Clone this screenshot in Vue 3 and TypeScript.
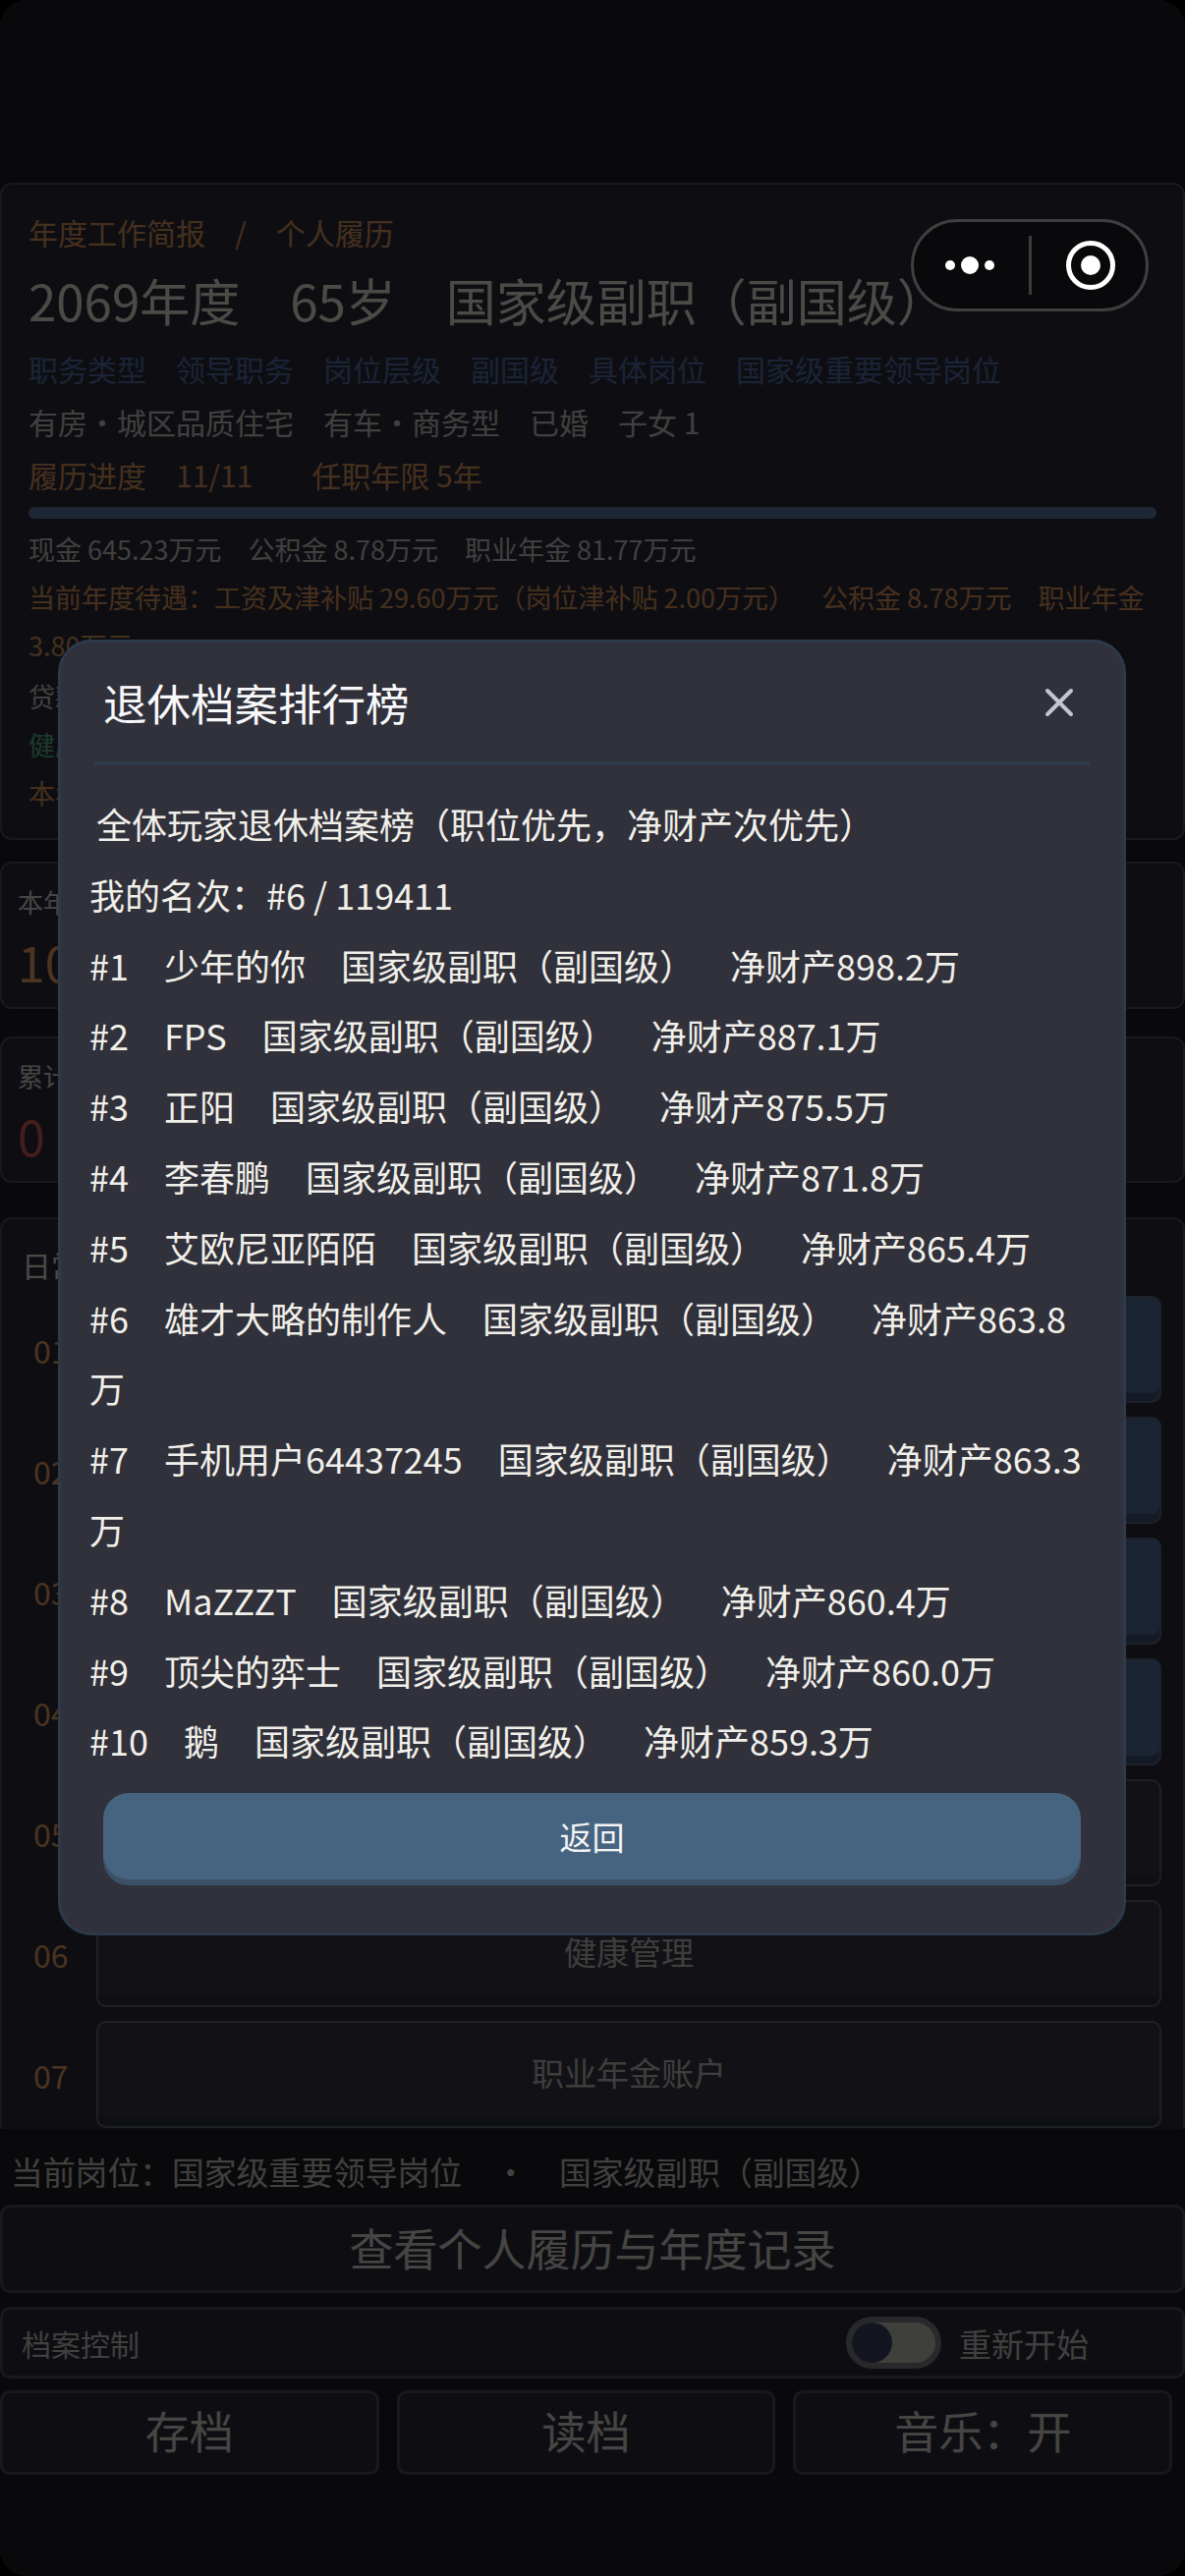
<script setup lang="ts">
const tasks: { no: string; label: string; active: boolean }[] = [
  { no: '01', label: '', active: true },
  { no: '02', label: '', active: true },
  { no: '03', label: '', active: true },
  { no: '04', label: '', active: true },
  { no: '05', label: '', active: false },
  { no: '06', label: '健康管理', active: false },
  { no: '07', label: '职业年金账户', active: false },
]
const grade = '国家级副职（副国级）'
const ranks: [string, string][] = [
  ['少年的你', '898.2'],
  ['FPS', '887.1'],
  ['正阳', '875.5'],
  ['李春鹏', '871.8'],
  ['艾欧尼亚陌陌', '865.4'],
  ['雄才大略的制作人', '863.8'],
  ['手机用户64437245', '863.3'],
  ['MaZZZT', '860.4'],
  ['顶尖的弈士', '860.0'],
  ['鹅', '859.3'],
]
</script>

<template>
  <div class="screen">
    <div class="main">
      <section class="card profile">
        <div class="crumbs orange">年度工作简报　/　个人履历</div>
        <h1 class="title">2069年度　65岁　国家级副职（副国级）</h1>
        <div class="line blue">职务类型　领导职务　岗位层级　副国级　具体岗位　国家级重要领导岗位</div>
        <div class="line grey">有房·城区品质住宅　有车·商务型　已婚　子女 1</div>
        <div class="line orange">履历进度　11/11　　任职年限 5年</div>
        <div class="bar"></div>
        <div class="small grey first">现金 645.23万元　公积金 8.78万元　职业年金 81.77万元</div>
        <div class="small orange">当前年度待遇：工资及津补贴 29.60万元（岗位津补贴 2.00万元）　&ensp;公积金 8.78万元　职业年金 3.80万元</div>
        <div class="small grey loan">贷款</div>
        <div class="small green">健康</div>
        <div class="small orange">本年</div>
      </section>

      <section class="card stat stat-a">
        <div class="stat-label">本年</div>
        <div class="stat-value orange-strong">10</div>
      </section>
      <section class="card stat stat-b">
        <div class="stat-label">累计</div>
        <div class="stat-value red">0</div>
      </section>

      <section class="card tasks">
        <div class="tasks-head">日常</div>
        <div v-for="t in tasks" :key="t.no" class="task">
          <span class="task-no">{{ t.no }}</span>
          <div class="task-btn" :class="{ on: t.active }">{{ t.label }}</div>
        </div>
      </section>
    </div>

    <footer class="foot">
      <div class="current">当前岗位：国家级重要领导岗位<span class="dot">·</span>国家级副职（副国级）</div>
      <div class="wide-btn">查看个人履历与年度记录</div>
      <div class="control">
        <span class="control-label">档案控制</span>
        <span class="switch"><i class="thumb"></i></span>
        <span class="control-text">重新开始</span>
      </div>
      <div class="trio">
        <div class="trio-btn">存档</div>
        <div class="trio-btn">读档</div>
        <div class="trio-btn">音乐：开</div>
      </div>
    </footer>

    <div class="scrim"></div>

    <div class="capsule">
      <svg class="cap-dots" width="60" height="24" viewBox="0 0 60 24">
        <circle cx="10" cy="12" r="5" fill="#fff" />
        <circle cx="30" cy="12" r="9" fill="#fff" />
        <circle cx="50" cy="12" r="5" fill="#fff" />
      </svg>
      <span class="cap-sep"></span>
      <svg class="cap-target" width="50" height="50" viewBox="0 0 50 50">
        <circle cx="25" cy="25" r="22.5" fill="none" stroke="#fff" stroke-width="5" />
        <circle cx="25" cy="25" r="10" fill="#fff" />
      </svg>
    </div>

    <div class="modal">
      <div class="modal-head">
        <span class="modal-title">退休档案排行榜</span>
        <svg class="modal-close" width="30" height="30" viewBox="0 0 30 30">
          <path d="M3 3 L27 27 M27 3 L3 27" fill="none" stroke="#c3c5d0" stroke-width="4" stroke-linecap="round" />
        </svg>
      </div>
      <div class="modal-rule"></div>
      <div class="modal-body">
        <p class="lead">全体玩家退休档案榜（职位优先，净财产次优先）</p>
        <p>我的名次：#6 / 119411</p>
        <p v-for="(r, i) in ranks" :key="i">#{{ i + 1 }}　{{ r[0] }}　{{ grade }}　&ensp;净财产{{ r[1] }}万</p>
      </div>
      <div class="back">返回</div>
    </div>
  </div>
</template>

<style>
html, body { margin: 0; background: #000; }
</style>

<style scoped>
.screen {
  position: relative;
  width: 1206px;
  height: 2622px;
  overflow: hidden;
  border-radius: 28px;
  background: #212128;
  font-family: "Noto Sans CJK SC", "Noto Sans", sans-serif;
  color: #f7f7ea;
}
.main {
  height: 2167px;
  box-sizing: border-box;
  padding-top: 186px;
  overflow: hidden;
}
.card {
  box-sizing: border-box;
  background: #2f2f3f;
  border: 2px solid #555660;
  border-radius: 12px;
}
.orange { color: #e8a065; }
.orange-strong { color: #fbae6e; }
.blue { color: #5a7ab5; }
.grey { color: #d8d8d0; }
.green { color: #5fc79a; }
.red { color: #e8675a; }

.profile {
  height: 669px;
  padding: 24px 27px 0;
}
.crumbs { font-size: 30px; line-height: 48px; margin-bottom: 15px; }
.title { margin: 0 0 13px; font-size: 51px; line-height: 60px; font-weight: 400; white-space: nowrap; }
.line { font-size: 30px; line-height: 54px; white-space: nowrap; }
.bar { height: 12px; margin: 6px 0 6px; border-radius: 6px; background: #6783b2; }
.small { font-size: 27px; line-height: 49px; }
.loan { margin-top: 3px; }

.stat { padding-left: 16px; }
.stat-a { height: 150px; margin-top: 22px; padding-top: 20px; }
.stat-b { height: 149px; margin-top: 28px; padding-top: 19px; }
.stat-label { font-size: 26px; line-height: 38px; color: #e8e8e0; }
.stat-value { font-size: 50px; line-height: 70px; padding-top: 6px; }

.tasks { margin-top: 35px; height: 960px; }
.tasks-head { font-size: 30px; line-height: 44px; padding: 24px 0 0 20px; height: 78px; box-sizing: border-box; }
.task { display: flex; align-items: center; height: 109px; margin-bottom: 14px; padding-right: 22px; }
.task-no { width: 96px; box-sizing: border-box; padding-left: 32px; font-size: 32px; color: #f7ad6b; }
.task-btn {
  flex: 1;
  height: 109px;
  box-sizing: border-box;
  display: flex;
  align-items: center;
  justify-content: center;
  padding-bottom: 5px;
  border: 2px solid #6a6c72;
  border-radius: 10px;
  background: #3c3e4c;
  box-shadow: inset 0 -8px 0 #31323f;
  font-size: 33px;
  color: #cfcfc8;
}
.task-btn.on {
  border-color: #63748c;
  background: #5d7ba7;
  box-shadow: inset 0 -8px 0 #465d80;
}

.foot { padding-top: 18px; }
.current { padding-left: 11px; font-size: 32.8px; line-height: 50px; color: #d8d8d0; white-space: nowrap; }
.dot { margin: 0 33px; }
.wide-btn {
  box-sizing: border-box;
  height: 90px;
  margin-top: 9px;
  display: flex;
  align-items: center;
  justify-content: center;
  padding-bottom: 4px;
  background: #2f2f3f;
  border: 3px solid #555660;
  border-radius: 10px;
  font-size: 45px;
  color: #e8e8e0;
}
.control {
  box-sizing: border-box;
  height: 73px;
  margin-top: 14px;
  display: flex;
  align-items: center;
  padding-left: 19px;
  background: #2f2f3f;
  border: 3px solid #555660;
  border-radius: 10px;
  color: #d8d8d0;
}
.control-label { flex: 1; font-size: 30px; }
.switch {
  position: relative;
  box-sizing: border-box;
  width: 97px;
  height: 53px;
  border: 6px solid #8a8b90;
  border-radius: 27px;
  background: #d4d8c8;
  margin-right: 18px;
}
.thumb {
  position: absolute;
  left: 0;
  top: 0;
  width: 41px;
  height: 41px;
  border-radius: 50%;
  background: #404a6e;
}
.control-text { width: 132px; margin-right: 95px; font-size: 33px; white-space: nowrap; }
.trio { display: flex; gap: 18px; margin-top: 12px; padding-right: 13px; }
.trio-btn {
  flex: 1;
  box-sizing: border-box;
  height: 86px;
  display: flex;
  align-items: center;
  justify-content: center;
  padding-bottom: 5px;
  background: #2f2f3f;
  border: 3px solid #555660;
  border-radius: 10px;
  font-size: 45px;
  color: #e8e8e0;
}

.scrim { position: absolute; inset: 0; background: rgba(0, 0, 0, 0.7); }

.capsule {
  position: absolute;
  left: 927px;
  top: 223px;
  box-sizing: border-box;
  width: 242px;
  height: 94px;
  display: flex;
  align-items: center;
  background: #09090b;
  border: 3px solid #3f3f40;
  border-radius: 47px;
}
.cap-dots { margin-left: 27px; }
.cap-sep { width: 3px; height: 60px; margin-left: 30px; background: #3c3c3d; }
.cap-target { margin-left: 35px; }

.modal {
  position: absolute;
  left: 59px;
  top: 651px;
  box-sizing: border-box;
  width: 1087px;
  height: 1319px;
  background: #30313b;
  border: 3px solid #2c3a4a;
  border-radius: 34px;
}
.modal-head {
  height: 121px;
  display: flex;
  align-items: center;
  justify-content: space-between;
  padding: 0 50px 0 43px;
  box-sizing: border-box;
}
.modal-title { font-size: 44.5px; color: #f8f8fa; }
.modal-rule { height: 4px; margin: 0 34px; background: #2f3b4a; }
.modal-body {
  padding: 24px 29px 0;
  font-size: 36px;
  line-height: 71.8px;
  color: #f1efe9;
}
.modal-body p { margin: 0; }
.lead { padding-left: 7px; }
.back {
  height: 88px;
  margin: 17px 43px 0;
  display: flex;
  align-items: center;
  justify-content: center;
  border-radius: 26px;
  background: #466480;
  box-shadow: 0 6px 0 #3a5166;
  font-size: 33px;
  color: #f4f4f4;
}
</style>
